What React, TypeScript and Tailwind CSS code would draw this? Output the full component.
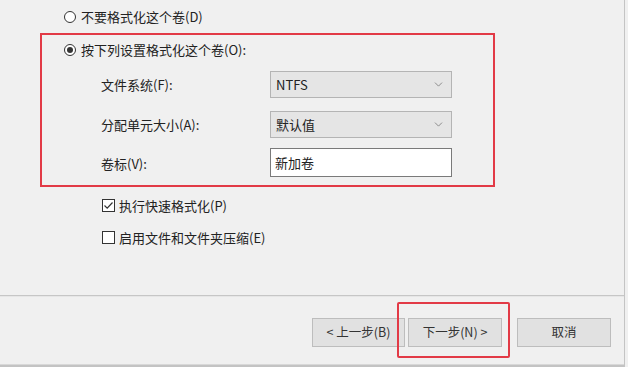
import { ChevronDown } from 'lucide-react'

const font = { fontFamily: '"Noto Sans CJK SC", "Noto Sans", sans-serif' }

function Radio({ checked }: { checked?: boolean }) {
    return (
        <span className="flex h-[12px] w-[12px] items-center justify-center rounded-full border border-[#333] bg-white">
            {checked && <span className="h-[6px] w-[6px] rounded-full bg-[#333]" />}
        </span>
    )
}

function Checkbox({ checked }: { checked?: boolean }) {
    return (
        <span className="flex h-[13px] w-[13px] items-center justify-center border border-[#333] bg-white">
            {checked && (
                <svg width="11" height="11" viewBox="0 0 11 11" fill="none">
                    <path d="M1.5 5.5 L4.2 8.2 L9.5 2.5" stroke="#333" strokeWidth="1.2" />
                </svg>
            )}
        </span>
    )
}

function Select({ value }: { value: string }) {
    return (
        <div className="flex h-[27px] w-[182px] items-center justify-between border border-[#b4b4b4] bg-[#e5e5e5] pl-[5px] pr-[6px]">
            <span className="text-[13px] text-[#222]">{value}</span>
            <ChevronDown className="h-[13px] w-[13px] text-[#777]" strokeWidth={1.5} />
        </div>
    )
}

function Button({ label }: { label: string }) {
    return (
        <div className="flex h-[29px] items-center justify-center border border-[#bdbdbd] bg-[#e1e1e1] text-[12.5px] text-[#333]">
            {label}
        </div>
    )
}

export default function App() {
    return (
        <div className="flex h-[367px] w-[628px] bg-[#f0f0f0] text-[#222]" style={font}>
            <div className="flex w-[625px] flex-col border-r border-[#c4c4c4]">
                {/* Options */}
                <div className="h-[295px]">
                    <div className="flex h-[12px] items-center gap-[5px] pl-[64px] mt-[11px] text-[13px]">
                        <Radio />
                        <span>不要格式化这个卷(D)</span>
                    </div>

                    <div className="mt-[10px] ml-[40px] flex h-[154px] w-[455px] flex-col border-2 border-[#e23a46] pt-[8px] pl-[22px]">
                        <div className="flex h-[14px] items-center gap-[5px] text-[13px]">
                            <Radio checked />
                            <span>按下列设置格式化这个卷(O):</span>
                        </div>
                        <div className="mt-[14px] ml-[37px] grid grid-cols-[169px_182px] items-center gap-y-[13px] text-[13px]">
                            <span>文件系统(F):</span>
                            <Select value="NTFS" />
                            <span>分配单元大小(A):</span>
                            <Select value="默认值" />
                            <span>卷标(V):</span>
                            <div className="-mt-[3px] flex h-[29px] items-center border border-[#7a7a7a] bg-white pl-[4px]">
                                新加卷
                            </div>
                        </div>
                    </div>

                    <div className="mt-[12px] flex flex-col gap-[19px] pl-[102px] text-[13px]">
                        <div className="flex h-[13px] items-center gap-[4px]">
                            <Checkbox checked />
                            <span>执行快速格式化(P)</span>
                        </div>
                        <div className="flex h-[13px] items-center gap-[4px]">
                            <Checkbox />
                            <span>启用文件和文件夹压缩(E)</span>
                        </div>
                    </div>
                </div>

                {/* Separator */}
                <div className="h-[2px] border-t border-[#c6c6c6] bg-[#e6e6e6]" />

                {/* Buttons */}
                <div className="flex flex-1 flex-col">
                    <div className="mt-[21px] flex pl-[312px]">
                        <div className="w-[93px]">
                            <Button label="< 上一步(B)" />
                        </div>
                        <div className="relative ml-[3px] w-[94px]">
                            <Button label="下一步(N) >" />
                            <div className="absolute -left-[11px] -top-[16px] -right-[8px] -bottom-[11px] rounded-[2px] border-2 border-[#e23a46]" />
                        </div>
                        <div className="ml-[15px] w-[94px]">
                            <Button label="取消" />
                        </div>
                    </div>
                    <div className="mt-auto h-[3px] border-t border-[#d8d8d8] bg-[#c3c3c3]" />
                </div>
            </div>
        </div>
    )
}
